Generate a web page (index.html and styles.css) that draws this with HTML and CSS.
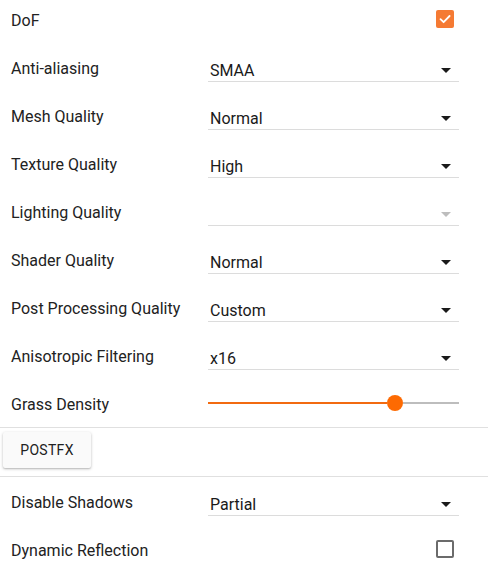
FILE: index.html
```html
<!DOCTYPE html>
<html>
<head>
<meta charset="utf-8">
<link rel="stylesheet" href="styles.css">
</head>
<body>
<div class="panel">
  <div class="row row-first">
    <span class="label">DoF</span>
    <span class="check-wrap"><span class="check checked"><svg viewBox="0 0 18 18" width="18" height="18"><path d="M4.5 9.2 L7.6 12.2 L13.6 6" fill="none" stroke="#fff" stroke-width="1.8" stroke-linecap="round" stroke-linejoin="round"/></svg></span></span>
  </div>
  <div class="row">
    <span class="label">Anti-aliasing</span>
    <div class="select"><span class="value">SMAA</span><svg class="arrow" viewBox="0 0 10 5" width="10" height="5"><polygon points="0,0 10,0 5,5"/></svg></div>
  </div>
  <div class="row">
    <span class="label">Mesh Quality</span>
    <div class="select"><span class="value">Normal</span><svg class="arrow" viewBox="0 0 10 5" width="10" height="5"><polygon points="0,0 10,0 5,5"/></svg></div>
  </div>
  <div class="row">
    <span class="label">Texture Quality</span>
    <div class="select"><span class="value">High</span><svg class="arrow" viewBox="0 0 10 5" width="10" height="5"><polygon points="0,0 10,0 5,5"/></svg></div>
  </div>
  <div class="row">
    <span class="label">Lighting Quality</span>
    <div class="select disabled"><span class="value"></span><svg class="arrow" viewBox="0 0 10 5" width="10" height="5"><polygon points="0,0 10,0 5,5"/></svg></div>
  </div>
  <div class="row">
    <span class="label">Shader Quality</span>
    <div class="select"><span class="value">Normal</span><svg class="arrow" viewBox="0 0 10 5" width="10" height="5"><polygon points="0,0 10,0 5,5"/></svg></div>
  </div>
  <div class="row">
    <span class="label">Post Processing Quality</span>
    <div class="select"><span class="value">Custom</span><svg class="arrow" viewBox="0 0 10 5" width="10" height="5"><polygon points="0,0 10,0 5,5"/></svg></div>
  </div>
  <div class="row">
    <span class="label">Anisotropic Filtering</span>
    <div class="select"><span class="value">x16</span><svg class="arrow" viewBox="0 0 10 5" width="10" height="5"><polygon points="0,0 10,0 5,5"/></svg></div>
  </div>
  <div class="row">
    <span class="label">Grass Density</span>
    <div class="slider">
      <div class="track-fill" style="width:179px"></div>
      <div class="thumb"></div>
      <div class="track-rest"></div>
    </div>
  </div>
  <div class="divider"></div>
  <div class="button-row">
    <button class="btn">POSTFX</button>
  </div>
  <div class="divider"></div>
  <div class="row">
    <span class="label">Disable Shadows</span>
    <div class="select"><span class="value">Partial</span><svg class="arrow" viewBox="0 0 10 5" width="10" height="5"><polygon points="0,0 10,0 5,5"/></svg></div>
  </div>
  <div class="row">
    <span class="label">Dynamic Reflection</span>
    <span class="check-wrap"><span class="check"></span></span>
  </div>
</div>
</body>
</html>
```

FILE: styles.css
```css
html, body {
  margin: 0;
  padding: 0;
  background: #fff;
}
body {
  font-family: Roboto, "Noto Sans", Arial, sans-serif;
  font-size: 16px;
  color: #212121;
  width: 488px;
  height: 572px;
  overflow: hidden;
}
.panel {
  display: flex;
  flex-direction: column;
}
.row {
  height: 48px;
  box-sizing: border-box;
  display: flex;
  align-items: center;
  padding-left: 11px;
}
.row-first {
  height: 43px;
  padding-bottom: 5px;
}
.label {
  width: 197px;
  flex: none;
  white-space: nowrap;
  padding-top: 3px;
  color: #222;
}
.select {
  width: 251px;
  height: 28px;
  margin-top: 2px;
  box-sizing: border-box;
  padding-top: 6px;
  border-bottom: 1px solid #dcdcdc;
  display: flex;
  align-items: center;
  justify-content: space-between;
  padding-left: 2px;
  padding-right: 8px;
}
.value {
  color: #1a1a1a;
}
.arrow {
  fill: #1a1a1a;
  width: 10px;
  height: 5px;
}
.select.disabled .arrow {
  fill: #bdbdbd;
}
.check-wrap {
  margin-left: auto;
  margin-right: 34px;
  display: flex;
}
.check {
  width: 18px;
  height: 18px;
  box-sizing: border-box;
  border: 2px solid #6b6b6b;
  border-radius: 2px;
  display: flex;
}
.check.checked {
  border: none;
  background: #f57a33;
}
.slider {
  width: 251px;
  display: flex;
  align-items: center;
  height: 16px;
  margin-top: -1px;
}
.track-fill {
  height: 2px;
  background: #f26a10;
  flex: none;
}
.thumb {
  width: 16px;
  height: 16px;
  border-radius: 50%;
  background: #fd6a02;
  flex: none;
}
.track-rest {
  height: 2px;
  background: #bdbdbd;
  flex: 1;
}
.divider {
  height: 1px;
  background: #e0e0e0;
}
.button-row {
  height: 48px;
  box-sizing: border-box;
  display: flex;
  align-items: flex-start;
  padding-top: 4px;
  padding-left: 3px;
}
.btn {
  font-family: Roboto, "Noto Sans", Arial, sans-serif;
  font-size: 14px;
  font-weight: 400;
  color: #212121;
  background: #fafafa;
  border: none;
  border-radius: 2px;
  width: 88px;
  height: 36px;
  padding: 0;
  box-shadow: 0 1px 3px rgba(0,0,0,0.25), 0 1px 1px rgba(0,0,0,0.08);
  letter-spacing: 0.3px;
}
```
